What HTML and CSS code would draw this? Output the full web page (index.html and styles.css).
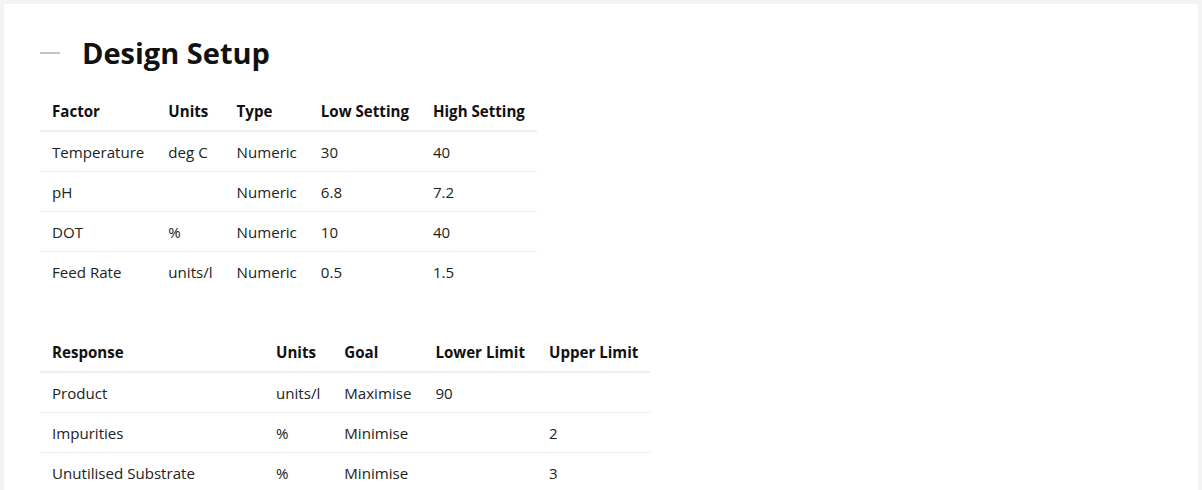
FILE: index.html
```html
<!DOCTYPE html>
<html>
<head>
<meta charset="utf-8">
<link rel="stylesheet" href="styles.css">
</head>
<body>
<div class="card">
  <div class="title-row">
    <span class="dash"></span>
    <h1 class="title">Design Setup</h1>
  </div>
  <table class="grid factors">
    <thead>
      <tr><th>Factor</th><th>Units</th><th>Type</th><th>Low Setting</th><th>High Setting</th></tr>
    </thead>
    <tbody>
      <tr><td>Temperature</td><td>deg C</td><td>Numeric</td><td>30</td><td>40</td></tr>
      <tr><td>pH</td><td></td><td>Numeric</td><td>6.8</td><td>7.2</td></tr>
      <tr><td>DOT</td><td>%</td><td>Numeric</td><td>10</td><td>40</td></tr>
      <tr><td>Feed Rate</td><td>units/l</td><td>Numeric</td><td>0.5</td><td>1.5</td></tr>
    </tbody>
  </table>
  <table class="grid responses">
    <thead>
      <tr><th class="wide">Response</th><th>Units</th><th>Goal</th><th>Lower Limit</th><th>Upper Limit</th></tr>
    </thead>
    <tbody>
      <tr><td>Product</td><td>units/l</td><td>Maximise</td><td>90</td><td></td></tr>
      <tr><td>Impurities</td><td>%</td><td>Minimise</td><td></td><td>2</td></tr>
      <tr><td>Unutilised Substrate</td><td>%</td><td>Minimise</td><td></td><td>3</td></tr>
    </tbody>
  </table>
</div>
</body>
</html>
```
FILE: styles.css
```css
html, body {
  margin: 0;
  padding: 0;
  background: #f3f3f3;
}
body {
  padding: 4px 4px 0 4px;
  font-family: "Open Sans", "Liberation Sans", sans-serif;
  color: #222;
}
.card {
  background: #fff;
  padding: 24px 36px 0 36px;
  min-height: 486px;
  box-sizing: border-box;
}
.title-row {
  display: flex;
  align-items: center;
  height: 50px;
  margin-bottom: 14px;
}
.dash {
  width: 20px;
  height: 2px;
  background: #c4c4c4;
  margin-right: 22px;
}
.title {
  margin: 0;
  font-size: 29px;
  font-weight: 700;
  color: #111;
  line-height: 50px;
}
.grid {
  border-collapse: collapse;
  font-size: 15.1px;
}
.grid th {
  text-align: left;
  font-weight: 700;
  color: #111;
  padding: 0 12px;
  height: 38px;
  border-bottom: 2px solid #eeeeee;
}
.grid td {
  padding: 0 12px;
  height: 39px;
  border-top: 1px solid #eeeeee;
}
.grid tbody tr:first-child td {
  border-top: none;
}
.factors {
  margin-bottom: 42px;
}
.responses .wide {
  width: 200px;
}
```
